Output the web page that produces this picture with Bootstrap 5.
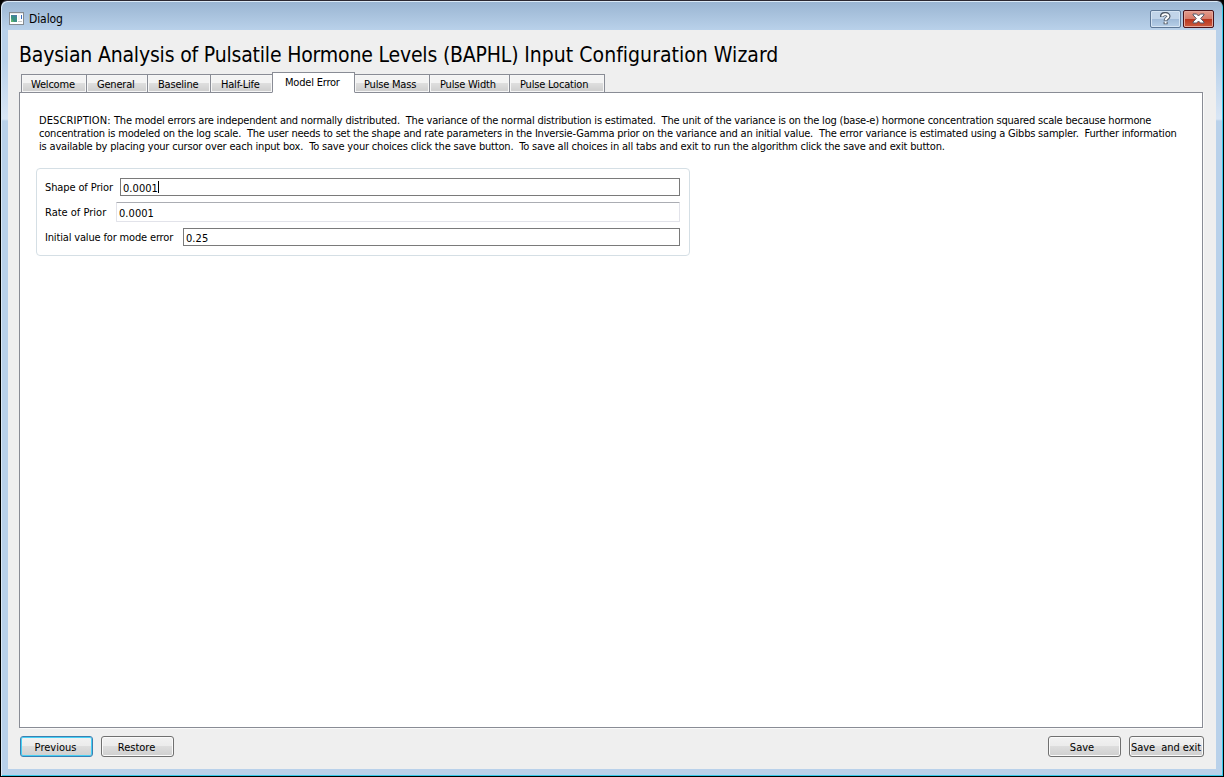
<!DOCTYPE html>
<html lang="en">
<head>
<meta charset="utf-8">
<title>Dialog</title>
<link href="https://cdn.jsdelivr.net/npm/bootstrap@5.3.0/dist/css/bootstrap.min.css" rel="stylesheet">
<script src="https://cdn.jsdelivr.net/npm/bootstrap@5.3.0/dist/js/bootstrap.bundle.min.js"></script>
<style>
html,body{height:100%}
body{margin:0;overflow:hidden;background:#000;font:11px/13px "DejaVu Sans Condensed","DejaVu Sans",sans-serif;color:#000}
.win{width:1224px;height:777px;border:1px solid #000;border-top-color:#2b2730;border-radius:7px 7px 0 0;padding:0 7px 7px;
 background:linear-gradient(#99b4d1 0,#b9d1ea 29px,#b9d1ea 60px,#d9e6f5 118px,#b9d1ea 120px);
 box-shadow:inset 1px 1px 0 #dbe9f6,inset -1px -1px 0 #36c9ea}
.titlebar{height:29px;padding:0 2px 0 1px;font-size:12px;letter-spacing:-.1px}
.caption-btns{padding-top:9px;gap:2px}
.caption-btn{width:31px;height:18px;padding:0;border:1px solid #5d7796;border-radius:2px;box-shadow:inset 0 0 0 1px #d5e4f3;background:linear-gradient(#c1d4e9 0 50%,#9fbad8 50%,#b7cfe8);display:flex;align-items:center;justify-content:center}
.caption-close{border-color:#4a1219;box-shadow:inset 0 0 0 1px #e5a79b;background:linear-gradient(#e39b8c 0,#d67b69 50%,#b9331c 50%,#cc5c3f)}
.dlg{height:739px;background:#efefef;padding:0 13px 0 11px}
.heading{font:21px/26px "DejaVu Sans Condensed","DejaVu Sans",sans-serif;letter-spacing:-.18px;padding-top:12px;height:42px;white-space:nowrap;margin:0}
.heading .wide{letter-spacing:.03px}
.tabs{height:21px;padding-left:2px;position:relative;z-index:1;letter-spacing:-.2px}
.tabs .nav-link{padding:0 0 0 9px;height:19px;line-height:20px;border:1px solid #898c95;border-radius:0;color:#000;background:linear-gradient(#f3f3f3 0 50%,#dedede 50%,#cdcdcd);box-shadow:inset 0 0 0 1px #f6f6f6;margin-right:-1px;margin-bottom:0;white-space:nowrap}
.tabs .nav-link.active{height:21px;background:#fff;border-bottom-color:#fff;color:#000;padding-left:12px;line-height:20px;box-shadow:none;z-index:2;position:relative}
.tabs .nav-link.inset-10{padding-left:10px}
.w-welcome{width:66px}.w-general{width:62px}.w-base{width:64px}.w-half{width:63px}.w-model{width:83px}.w-mass{width:76px}.w-width{width:81px}.w-loc{width:96px}
.pane{height:636px;margin-top:-1px;background:#fff;border:1px solid #898c95;padding:20px 15px 0 16px;box-shadow:1px 1px 0 #fafafa}
.desc{white-space:pre;padding:1px 0 0 3px;height:55px;letter-spacing:-.184px;margin:0}
.desc .lead-in{letter-spacing:.12px}
.desc .first{letter-spacing:-.202px}
.desc .tight{letter-spacing:-.207px}
.group{width:654px;height:88px;border:1px solid #d5dfe5;border-radius:4px;padding:9px 9px 0 8px}
.frow{height:25px}
.frow label{height:19px;line-height:20px;white-space:nowrap;letter-spacing:-.12px}
.frow .label-tight{letter-spacing:-.16px}
.frow .label-loose{letter-spacing:0}
.edit{border:1px solid #7a7a7a;border-radius:0;padding:1px 2px 0;height:18px;min-height:0;font:inherit;line-height:18px;color:#000;background:#fff;letter-spacing:.05px;width:auto}
.edit-soft{height:20px;border-color:#abadb3 #e2e3ea #e2e3ea;margin-top:-1px;padding-top:2px;border-radius:1px}
.caret{width:1px;height:12px;background:#000;margin-top:1px}
.footer-bar{padding:8px 0 0 1px;margin-right:-1px}
.btn-w{height:21px;width:73px;padding:1px 2px 0 0;font:inherit;line-height:20px;border:1px solid #707070;border-radius:3px;color:#000;background:linear-gradient(#f2f2f2 0,#ebebeb 50%,#dddddd 50%,#cfcfcf);box-shadow:inset 0 0 0 1px #fafafa;white-space:pre}
.btn-default{border-color:#3c7fb1;box-shadow:inset 0 0 0 1px #46d0f5}
.btn-wide{width:75px;padding:1px 1px 0 0;letter-spacing:-.05px}
</style>
</head>
<body>
<div class="win">
 <header class="titlebar d-flex">
  <svg width="16" height="14" viewBox="0 0 16 14" style="margin-top:11px"><rect x=".5" y=".5" width="14" height="12" fill="#fff" stroke="#858b91"/><rect x="1" y="1" width="13" height="1" fill="#e8e8e8"/><rect x="2" y="3" width="6" height="7" fill="#3b8f86"/><path d="M2 10V6l3 4z" fill="#5fb36d"/><path d="M2 3h6v2z" fill="#4f78a8"/><rect x="9" y="3" width="2" height="5" fill="#f2f2f2"/><rect x="12" y="3" width="1" height="4" fill="#3d6fc0"/><rect x="9" y="9" width="4" height="1" fill="#c8c8c8"/></svg>
  <span class="ms-1" style="padding-top:12px">Dialog</span>
  <div class="caption-btns ms-auto d-flex align-items-start">
   <button class="caption-btn" type="button" aria-label="Help"><svg width="11" height="14" viewBox="0 0 11 14" fill="none"><path d="M1.9 5V4C2.3 1.2 8.8 1.2 8.5 4.3 8.4 6.3 5.6 6.3 5.6 8.8M5.6 9.8v2.4" stroke="#4e5866" stroke-width="4"/><path d="M2.3 4.4V4C2.7 1.6 8.6 1.7 8.4 4.3 8.3 6.1 5.6 6.3 5.6 8.3M5.6 9.6v2" stroke="#fff" stroke-width="2"/></svg></button>
   <button class="caption-btn caption-close" type="button" aria-label="Close"><svg width="13" height="11" viewBox="0 0 13 11" style="margin-top:-1px"><path d="M1 1h3.6l1.9 2 1.9-2H12v1L8.7 5.5 12 9v1H8.4L6.5 8l-1.9 2H1V9l3.3-3.5L1 2z" fill="#fff" stroke="#535666"/></svg></button>
  </div>
 </header>
 <main class="dlg">
  <h1 class="heading">Baysian Analysis of Pulsatile Hormone Levels (BAPHL) <span class="wide">Input Configuration Wizard</span></h1>
  <nav class="tabs nav align-items-end flex-nowrap">
   <a class="nav-link w-welcome">Welcome</a><a class="nav-link w-general inset-10">General</a><a class="nav-link w-base inset-10">Baseline</a><a class="nav-link w-half inset-10">Half-Life</a><a class="nav-link active w-model">Model Error</a><a class="nav-link w-mass">Pulse Mass</a><a class="nav-link w-width inset-10">Pulse Width</a><a class="nav-link w-loc inset-10">Pulse Location</a>
  </nav>
  <section class="pane">
   <p class="desc"><span class="lead-in">DESCRIPTION: </span><span class="first">The model errors are independent and normally distributed.  The variance of the normal distribution is estimated.  The unit of the variance is on the log (base-e) hormone concentration squared scale because hormone</span>
<span class="tight">concentration is modeled on the log scale.  The user needs to set the shape and rate parameters in the Inversie-Gamma prior on the variance and an initial value.  The error variance is estimated using a Gibbs sampler.  Further information</span>
<span>is available by placing your cursor over each input box.  To save your choices click the save button.  To save all choices in all tabs and exit to run the algorithm click the save and exit button.</span></p>
   <form class="group">
    <div class="frow d-flex"><label style="width:75px">Shape of Prior</label><div class="edit form-control flex-fill d-flex">0.0001<span class="caret"></span></div></div>
    <div class="frow d-flex"><label class="label-loose" style="width:71px">Rate of Prior</label><div class="edit edit-soft form-control flex-fill">0.0001</div></div>
    <div class="frow d-flex"><label class="label-tight" style="width:138px">Initial value for mode error</label><div class="edit form-control flex-fill">0.25</div></div>
   </form>
  </section>
  <footer class="footer-bar d-flex gap-2">
   <button class="btn btn-w btn-default" type="button">Previous</button>
   <button class="btn btn-w" type="button">Restore</button>
   <button class="btn btn-w ms-auto" type="button" style="padding-right:5px">Save</button>
   <button class="btn btn-w btn-wide" type="button">Save  and exit</button>
  </footer>
 </main>
</div>
</body>
</html>
